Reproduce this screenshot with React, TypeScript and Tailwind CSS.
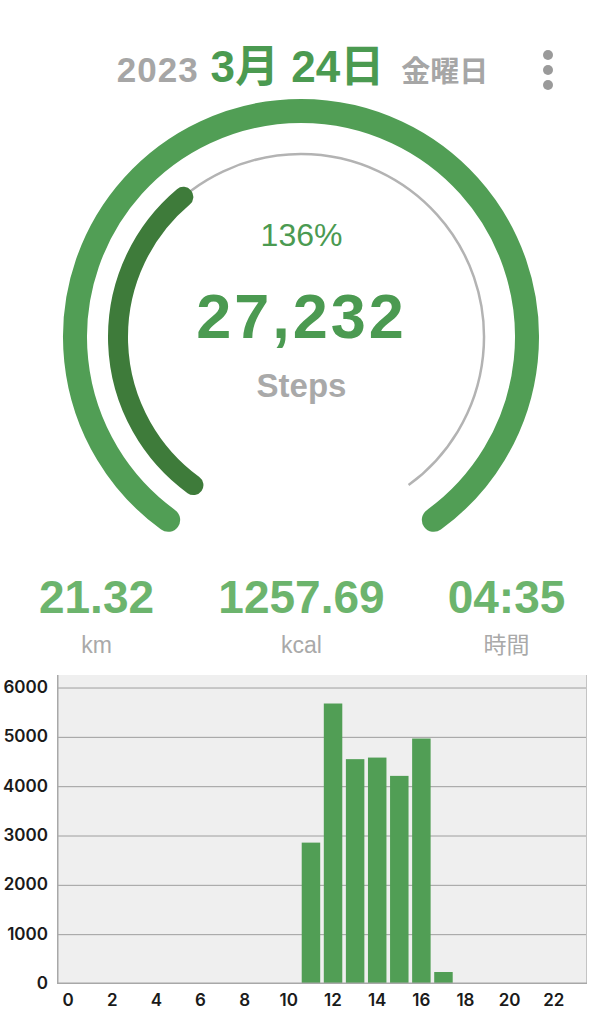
import React from 'react';

const font = { fontFamily: '"Liberation Sans", "Noto Sans CJK JP", sans-serif' };
const axisFont = { fontFamily: 'Inter, "Liberation Sans", sans-serif' };

// hourly step counts, index = hour
const hourly = [0, 0, 0, 0, 0, 0, 0, 0, 0, 0, 0, 2866, 5686, 4558, 4590, 4219, 4976, 243, 0, 0, 0, 0, 0, 0];

function polar(cx: number, cy: number, r: number, deg: number) {
  const a = (deg * Math.PI) / 180;
  return [cx + r * Math.sin(a), cy - r * Math.cos(a)];
}

function arc(cx: number, cy: number, r: number, from: number, to: number) {
  const [x1, y1] = polar(cx, cy, r, from);
  const [x2, y2] = polar(cx, cy, r, to);
  const sweep = (to - from + 360) % 360;
  return `M ${x1} ${y1} A ${r} ${r} 0 ${sweep > 180 ? 1 : 0} 1 ${x2} ${y2}`;
}

function Ring() {
  const cx = 301;
  const cy = 241;
  return (
    <div className="relative h-[450px] w-full">
      <svg width="603" height="450" className="block">
        <path d={arc(cx, cy, 226, 216, 144)} fill="none" stroke="#519e55" strokeWidth="24" strokeLinecap="round" />
        <path d={arc(cx, cy, 183, 216, 144)} fill="none" stroke="#b3b3b3" strokeWidth="2.5" />
        <path d={arc(cx, cy, 183, 216, 320)} fill="none" stroke="#3e7b3a" strokeWidth="20" strokeLinecap="round" />
      </svg>
      {/* center labels */}
      <div className="absolute inset-x-0 top-[118px] flex flex-col items-center">
        <div className="text-[32px] leading-[42px] text-[#4b9a51]">136%</div>
        <div className="mt-[20px] text-[63px] leading-[80px] font-bold tracking-[3px] text-[#4b9a51]">27,232</div>
        <div className="mt-[10px] text-[33px] leading-[40px] font-bold text-[#a9a9a9]">Steps</div>
      </div>
    </div>
  );
}

function Stat({ value, label }: { value: string; label: string }) {
  return (
    <div className="flex w-[180px] flex-col items-center">
      <div className="text-[46px] leading-[46px] font-bold text-[#6cb46d]">{value}</div>
      <div className="mt-[11px] text-[23px] leading-[28px] text-[#a9a9a9]">{label}</div>
    </div>
  );
}

function Chart() {
  const W = 530;
  const H = 309;
  const perK = 49.33;
  const slot = W / 24;
  const yLabels = [6000, 5000, 4000, 3000, 2000, 1000, 0];
  const xLabels = [0, 2, 4, 6, 8, 10, 12, 14, 16, 18, 20, 22];

  return (
    <div className="flex" style={axisFont}>
      {/* y axis labels */}
      <div className="flex w-[57px] flex-col">
        {yLabels.map((v) => (
          <div key={v} className="flex h-[49.33px] items-center justify-end pr-[9px] text-[17px] font-semibold text-[#1a1a1a]">
            {v}
          </div>
        ))}
      </div>
      <div className="flex flex-col pt-[12px]">
        <svg width={W} height={H} className="block">
          <rect x="0" y="0" width={W} height={H} fill="#efefef" />
          {[1, 2, 3, 4, 5, 6].map((k) => (
            <line key={k} x1="0" x2={W} y1={H - k * perK} y2={H - k * perK} stroke="#9e9e9e" strokeWidth="1" />
          ))}
          {hourly.map((v, i) =>
            v > 0 ? (
              <rect
                key={i}
                x={i * slot + 1.8}
                y={H - (v / 1000) * perK}
                width={slot - 3.6}
                height={(v / 1000) * perK}
                fill="#519e55"
              />
            ) : null
          )}
          <line x1="0.75" x2="0.75" y1="0" y2={H} stroke="#a8a8a8" strokeWidth="1.5" />
          <line x1={W - 0.5} x2={W - 0.5} y1="0" y2={H} stroke="#c4c4c4" strokeWidth="1" />
          <line x1="0" x2={W} y1={H - 0.75} y2={H - 0.75} stroke="#a8a8a8" strokeWidth="1.5" />
        </svg>
        <div className="flex h-[34px] items-center">
          {xLabels.map((v) => (
            <div key={v} className="w-[44.17px]">
              <div className="flex w-[22.08px] justify-center whitespace-nowrap text-[17px] font-semibold text-[#1a1a1a]">{v}</div>
            </div>
          ))}
        </div>
      </div>
    </div>
  );
}

export default function App() {
  return (
    <div className="h-[1024px] w-[603px] overflow-hidden bg-white" style={font}>
      {/* Date header */}
      <div className="relative mt-[40px] flex h-[56px] items-center justify-center">
        <div className="-mt-[2px] flex items-baseline pl-[2px]">
          <span className="text-[35px] font-bold tracking-[1px] text-[#a6a6a6]">2023</span>
          <span className="ml-[12px] text-[44px] font-bold text-[#4b9a51]">3月 24日</span>
          <span className="ml-[17px] text-[29px] font-bold text-[#a6a6a6]">金曜日</span>
        </div>
        <div className="absolute right-[50px] top-[10px] flex flex-col gap-[5px]">
          <span className="block h-[10px] w-[10px] rounded-full bg-[#9a9a9a]" />
          <span className="block h-[10px] w-[10px] rounded-full bg-[#9a9a9a]" />
          <span className="block h-[10px] w-[10px] rounded-full bg-[#9a9a9a]" />
        </div>
      </div>

      <Ring />

      {/* summary stats */}
      <div className="mt-[28px] flex justify-center gap-[25px]">
        <Stat value="21.32" label="km" />
        <Stat value="1257.69" label="kcal" />
        <Stat value="04:35" label="時間" />
      </div>

      <div className="mt-[4px]">
        <Chart />
      </div>
    </div>
  );
}
